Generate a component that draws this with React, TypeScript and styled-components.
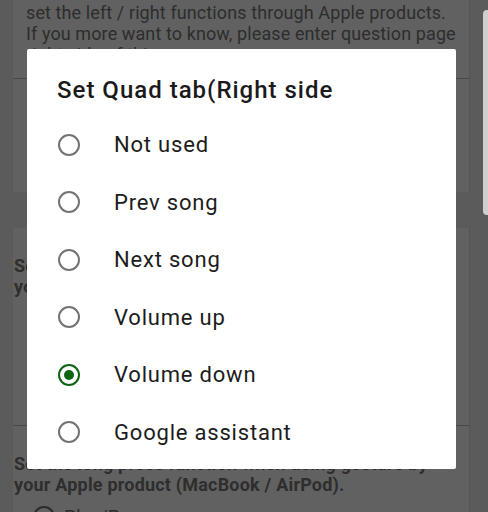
import React from "react";
import styled, { createGlobalStyle } from "styled-components";

const Global = createGlobalStyle`
  html, body { margin: 0; padding: 0; }
  body {
    width: 488px;
    height: 512px;
    overflow: hidden;
    background: #e3e3e3;
    font-family: Roboto, "Noto Sans", "Liberation Sans", sans-serif;
  }
`;

const Page = styled.div`
  display: flex;
  flex-direction: column;
  gap: 36px;
  padding: 0 18px 0 13px;
  width: 488px;
  box-sizing: border-box;
`;

const Card = styled.div`
  background: #f3f3f3;
  display: flex;
  flex-direction: column;
  border-right: 1px solid #d2d2d2;
`;

const Spacer = styled.div<{ $h: number }>`
  height: ${(p) => p.$h}px;
`;

const Divider = styled.div`
  height: 1px;
  background: #b8b8b8;
`;

const Info = styled.p`
  margin: 0;
  padding: 2px 13px 13px 13px;
  font-size: 18px;
  letter-spacing: 0.1px;
  line-height: 21px;
  color: #727272;
  white-space: nowrap;
`;

const Heading = styled.p`
  margin: 0;
  padding: 27px 1px 0 1px;
  font-size: 18px;
  letter-spacing: 0.2px;
  font-weight: 700;
  line-height: 21px;
  color: #737373;
  white-space: nowrap;
`;

const BgRow = styled.div`
  display: flex;
  align-items: center;
  gap: 9px;
  padding: 10px 0 0 20px;
  font-size: 19px;
  color: #6a6a6a;
`;

const BgRadio = styled.span`
  width: 22px;
  height: 22px;
  box-sizing: border-box;
  border: 2px solid #6a6a6a;
  border-radius: 50%;
  flex: none;
`;

const Scrim = styled.div`
  position: fixed;
  inset: 0;
  background: rgba(0, 0, 0, 0.6);
  padding: 49px 0 0 27px;
  box-sizing: border-box;
`;

const Dialog = styled.div`
  width: 429px;
  height: 420px;
  background: #ffffff;
  border-radius: 2px;
  box-sizing: border-box;
  padding: 27px 0 7px 0;
  display: flex;
  flex-direction: column;
`;

const Title = styled.h2`
  margin: 0 0 12px 30px;
  font-size: 24px;
  letter-spacing: 1px;
  line-height: 28px;
  font-weight: 500;
  color: #1a1a1a;
`;

const Option = styled.label`
  display: flex;
  align-items: center;
  height: 57.5px;
  padding-left: 31px;
  gap: 34px;
  font-size: 22px;
  letter-spacing: 0.8px;
  color: #1c1c1c;
`;

const Radio = styled.span<{ $on: boolean }>`
  width: 22px;
  height: 22px;
  box-sizing: border-box;
  border-radius: 50%;
  border: 2px solid ${(p) => (p.$on ? "#0d6412" : "#737373")};
  display: flex;
  align-items: center;
  justify-content: center;
  flex: none;
  &::after {
    content: "";
    width: 10px;
    height: 10px;
    border-radius: 50%;
    background: ${(p) => (p.$on ? "#0d6412" : "transparent")};
  }
`;

const EdgeHandle = styled.div`
  position: fixed;
  right: 0;
  top: 10px;
  width: 5px;
  height: 205px;
  background: #cfcfcf;
  border-radius: 4px 0 0 4px;
  z-index: 2;
`;

const options = [
  "Not used",
  "Prev song",
  "Next song",
  "Volume up",
  "Volume down",
  "Google assistant",
];

export default function App() {
  const selected = 4;
  return (
    <>
      <Global />
      <Page>
        <Card>
          <Info>
            set the left / right functions through Apple products.
            <br />
            If you more want to know, please enter question page
            <br />
            right side of this app.
          </Info>
          <Divider />
          <Spacer $h={113} />
        </Card>
        <Card>
          <Heading>
            Set the single tap function when used with
            <br />
            your Apple product (MacBook / AirPod).
          </Heading>
          <Spacer $h={128} />
          <Divider />
          <Heading>
            Set the long press function when using gesture by
            <br />
            your Apple product (MacBook / AirPod).
          </Heading>
          <BgRow>
            <BgRadio />
            Play/Pause song
          </BgRow>
        </Card>
      </Page>
      <Scrim>
        <Dialog role="dialog">
          <Title>Set Quad tab(Right side</Title>
          {options.map((o, i) => (
            <Option key={o}>
              <Radio $on={i === selected} />
              {o}
            </Option>
          ))}
        </Dialog>
      </Scrim>
      <EdgeHandle />
    </>
  );
}
